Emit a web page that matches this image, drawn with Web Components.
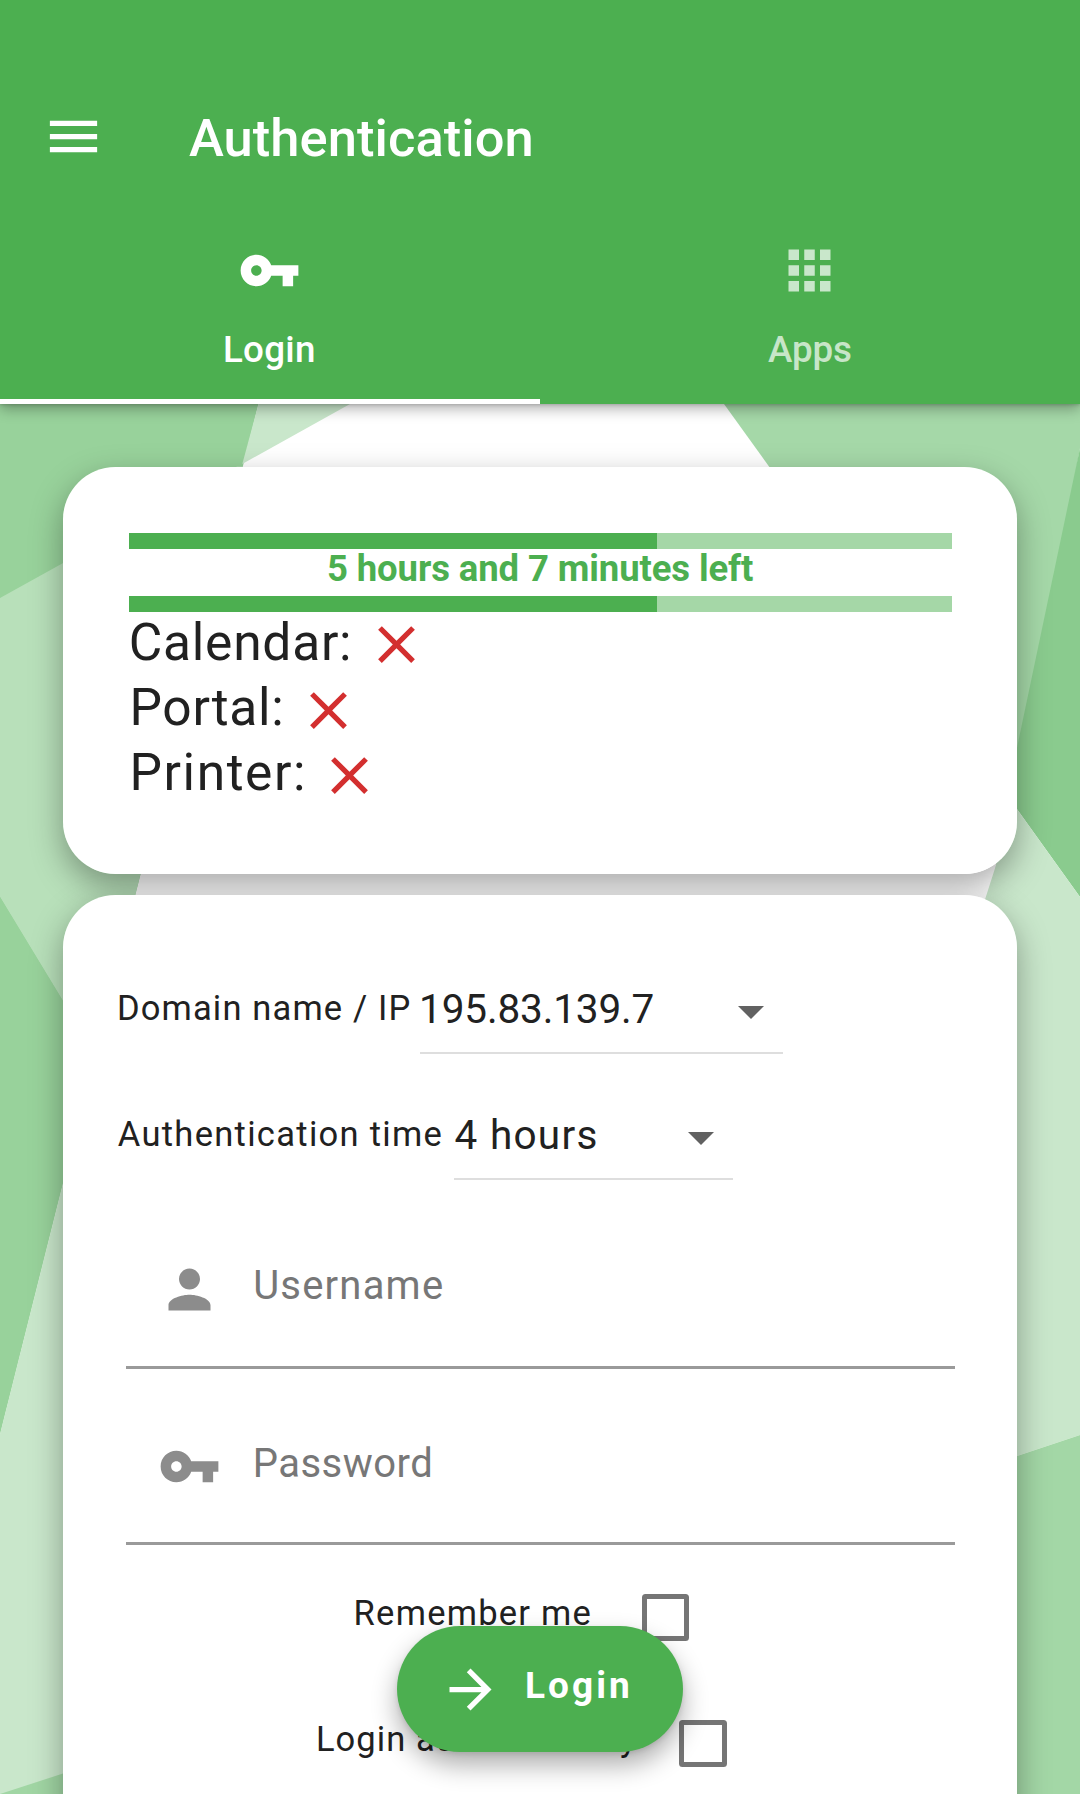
<!DOCTYPE html>
<html lang="en">
<head>
<meta charset="utf-8">
<title>Authentication</title>
<style>
  html, body { margin: 0; padding: 0; }
  body { font-family: Roboto, "Liberation Sans", sans-serif; color: #212121; background: #fff; height: 1794px; overflow: hidden; }
</style>
</head>
<body>
<auth-screen>
  <app-header slot="header">
    <fit-text slot="title" size="52.5" weight="500" ink="342.5">Authentication</fit-text>
    <app-tab slot="tabs" icon="key" active><fit-text size="36.75" weight="500" ink="89">Login</fit-text></app-tab>
    <app-tab slot="tabs" icon="apps"><fit-text size="36.75" weight="500" ink="83">Apps</fit-text></app-tab>
  </app-header>
  <material-card style="--pad:66px 65px 65.8px 66px">
    <time-left value="64.2"><fit-text size="36.5" weight="700" ink="425">5 hours and 7 minutes left</fit-text></time-left>
    <status-row><fit-text size="51.5" ink="217.3" lead="2.800">Calendar:</fit-text></status-row>
    <status-row><fit-text size="51.5" ink="147.7" lead="4.500">Portal:</fit-text></status-row>
    <status-row><fit-text size="51.5" ink="169.4" lead="4.500">Printer:</fit-text></status-row>
  </material-card>
  <material-card style="--pad:33px 62.4px 0 55.3px">
    <select-row style="--gap:10.4px;--w:363px"><fit-text slot="label" size="34.5" ink="290.500" lead="0.700">Domain name / IP</fit-text><fit-text size="40.5" ink="230.5" lead="2.200">195.83.139.7</fit-text></select-row>
    <select-row style="--gap:12.700px;--w:278.6px"><fit-text slot="label" size="34.5" ink="323.8" lead="-0.500">Authentication time</fit-text><fit-text size="40.5" ink="139.8" lead="1.3">4 hours</fit-text></select-row>
    <text-field icon="person" style="--top:78px;--bottom:48px"><fit-text size="40" ink="186.7">Username</fit-text></text-field>
    <text-field icon="key" style="--top:66px;--bottom:46.600px;--lift:5px"><fit-text size="40" ink="174.6" lead="0.500">Password</fit-text></text-field>
    <check-row style="--gap:51px;margin-top:9.600px"><fit-text size="34.5" ink="235">Remember me</fit-text></check-row>
    <check-row style="--gap:43.400px"><fit-text size="34.5" ink="318">Login automatically</fit-text></check-row>
  </material-card>
  <login-button slot="fab"><fit-text size="37" weight="700" ink="101">Login</fit-text></login-button>
</auth-screen>

<script>
const ICONS = {
  menu: 'M3 18h18v-2H3v2zm0-5h18v-2H3v2zm0-7v2h18V6H3z',
  key: 'M12.65 10C11.83 7.67 9.61 6 7 6c-3.31 0-6 2.69-6 6s2.69 6 6 6c2.61 0 4.83-1.67 5.65-4H17v4h4v-4h2v-4H12.65zM7 14c-1.1 0-2-.9-2-2s.9-2 2-2 2 .9 2 2-.9 2-2 2z',
  apps: 'M4 8h4V4H4v4zm6 12h4v-4h-4v4zm-6 0h4v-4H4v4zm0-6h4v-4H4v4zm6 0h4v-4h-4v4zm6-10v4h4V4h-4zm-6 4h4V4h-4v4zm6 6h4v-4h-4v4zm0 6h4v-4h-4v4z',
  person: 'M12 12c2.21 0 4-1.79 4-4s-1.79-4-4-4-4 1.79-4 4 1.79 4 4 4zm0 2c-2.67 0-8 1.34-8 4v2h16v-2c0-2.66-5.33-4-8-4z',
  close: 'M19 6.41L17.59 5 12 10.59 6.41 5 5 6.41 10.59 12 5 17.59 6.41 19 12 13.41 17.59 19 19 17.59 13.41 12z',
  forward: 'M12 4l-1.41 1.41L16.17 11H4v2h12.17l-5.58 5.59L12 20l8-8z'
};
const icon = name => `<svg width="63" height="63" viewBox="0 0 24 24" fill="currentColor" aria-hidden="true"><path d="${ICONS[name]}"/></svg>`;

class Base extends HTMLElement {
  connectedCallback() {
    if (this.shadowRoot) return;
    this.attachShadow({ mode: 'open' }).innerHTML = `<style>*{box-sizing:border-box}svg{display:block;flex:none}${this.css()}</style>${this.html()}`;
    this.ready?.();
  }
}

/* One line of text tracked so that its glyphs span a given width. */
class FitText extends Base {
  css() { return `:host{display:block;flex:none;white-space:pre;line-height:48px}`; }
  html() { return `<slot></slot>`; }
  ready() {
    const size = +this.getAttribute('size'), weight = this.getAttribute('weight') || 400;
    const ink = +this.getAttribute('ink'), lead = +(this.getAttribute('lead') || 0);
    const text = this.textContent;
    const ctx = document.createElement('canvas').getContext('2d');
    ctx.font = `${weight} ${size}px Roboto, "Liberation Sans", sans-serif`;
    const m = ctx.measureText(text);
    const natural = m.actualBoundingBoxLeft + m.actualBoundingBoxRight;
    Object.assign(this.style, {
      fontSize: size + 'px', fontWeight: weight, width: ink + 'px', marginLeft: lead + 'px',
      textIndent: m.actualBoundingBoxLeft + 'px',
      letterSpacing: (ink - natural) / (text.length - 1) + 'px'
    });
  }
}

class AuthScreen extends Base {
  css() { return `
    :host{display:grid;position:relative;width:1080px;height:1794px;overflow:hidden;isolation:isolate}
    .bg,.page{grid-area:1/1}
    .bg{z-index:-2}
    .page{display:flex;flex-direction:column}
    main{display:flex;flex-direction:column;gap:21px;padding:62.75px 63px 0}
    .fab{position:absolute;left:397px;top:1626px}`; }
  html() { return `
    <svg class="bg" width="1080" height="1794" viewBox="0 0 1080 1794">
      <path fill="#fff" d="M0 0h1080v1794H0z"/>
      <path fill="#98d29b" d="M0 404h258.5L0 1434z"/>
      <path fill="#b8e0ba" d="M0 598L237 466.6h5.8L140.500 874 108 1004 63 1001 0 897z"/>
      <path fill="#98d29b" d="M0 897l63 104 45 3L0 1434z"/>
      <path fill="#c9e7cb" d="M258.5 404H350L242.3 464z"/>
      <path fill="#c9e7cb" d="M0 1434L108 1004H540v790H0z"/>
      <path fill="#a1d6a4" d="M0 1794l63-20.5V1794z"/>
      <path fill="#a5d8a8" d="M724 404h356v44L1016 810z"/>
      <path fill="#8acb8e" d="M1080 448V897L1007 795.200z"/>
      <path fill="#c9e7cb" d="M1008.500 797.200L1080 897v538l-63 21h-77V1040L996.700 863z"/>
      <path fill="#c9e7cb" d="M1008.500 797.200L989.500 901l-10 54h60z"/>
      <path fill="#a3d7a6" d="M1080 1435l-63 21v338h63z"/>
    </svg>
    <div class="page"><slot name="header"></slot><main><slot></slot></main></div>
    <div class="fab"><slot name="fab"></slot></div>`; }
}

class AppHeader extends Base {
  css() { return `
    :host{display:block;background:#4caf50;color:#fff;padding-top:63px;height:404.25px;box-sizing:border-box;
      box-shadow:0 5px 13px rgba(0,0,0,.3),0 1px 3px rgba(0,0,0,.16)}
    .bar{display:flex;align-items:center;height:147px;padding-left:42px}
    .title{padding:2.400px 0 0 84px}
    .tabs{display:flex}`; }
  html() { return `<div class="bar">${icon('menu')}<div class="title"><slot name="title"></slot></div></div><div class="tabs"><slot name="tabs"></slot></div>`; }
}

class AppTab extends Base {
  css() { return `
    :host{display:flex;flex-direction:column;align-items:center;box-sizing:border-box;width:540px;height:194.250px;
      padding:28.900px 1px 0 0;color:rgba(255,255,255,.7);border-bottom:5.250px solid transparent}
    :host([active]){color:#fff;border-bottom-color:#fff}
    .label{margin-top:24.500px}`; }
  html() { return `${icon(this.getAttribute('icon'))}<div class="label"><slot></slot></div>`; }
}

class MaterialCard extends Base {
  css() { return `
    :host{display:block;position:relative;box-sizing:border-box;border-radius:52.5px;background:#fff;padding:var(--pad)}
    :host::before{content:"";position:absolute;inset:0;z-index:-1;border-radius:inherit;box-shadow:0 12px 32px rgba(0,0,0,.34)}
    :host(:last-of-type){flex:none;height:960px}`; }
  html() { return `<slot></slot>`; }
}

class TimeLeft extends Base {
  css() { return `
    :host{display:block;color:#4caf50}
    .bar{height:16px;background:#a5d7a7}
    .bar i{display:block;height:100%;background:#4caf50}
    .text{display:flex;justify-content:center;height:47px}
    ::slotted(fit-text){line-height:40.400px}`; }
  html() {
    const bar = `<div class="bar"><i style="width:${this.getAttribute('value')}%"></i></div>`;
    return `${bar}<div class="text"><slot></slot></div>${bar}`;
  }
}

class StatusRow extends Base {
  css() { return `
    :host{display:flex;align-items:center;gap:15.500px;height:65.400px}
    .label{padding-bottom:4px}
    svg{color:#d32f2f}`; }
  html() { return `<div class="label"><slot></slot></div>${icon('close')}`; }
}

class SelectRow extends Base {
  css() { return `
    :host{display:flex;align-items:flex-end;gap:var(--gap);height:126px}
    .label{padding-bottom:22.200px}
    .select{display:flex;justify-content:space-between;width:var(--w);padding:0 19px 18.500px 0;border-bottom:2px solid #dedede}
    svg{margin-top:20.500px;color:#616161}`; }
  html() { return `<div class="label"><slot name="label"></slot></div><div class="select"><slot></slot>
    <svg width="26" height="13" viewBox="0 0 26 13" fill="currentColor"><path d="M0 0h26L13 13z"/></svg></div>`; }
}

class TextField extends Base {
  css() { return `
    :host{display:flex;align-items:center;gap:34.500px;margin-left:8px;padding:var(--top) 0 var(--bottom) 31.400px;color:#777;position:relative}
    :host::after{content:"";position:absolute;left:0;right:0;bottom:0;height:2.600px;background:#9a9a9a}
    svg{color:#8c8c8c}
    .label{padding-bottom:var(--lift,7px)}`; }
  html() { return `${icon(this.getAttribute('icon'))}<div class="label"><slot></slot></div>`; }
}

class CheckRow extends Base {
  css() { return `
    :host{display:flex;align-items:center;justify-content:center;gap:var(--gap);height:126px;margin-left:7px;padding-right:35.400px;box-sizing:border-box}
    .label{padding-bottom:7.500px}
    .box{width:47.300px;height:47.300px;border:5px solid #757575;border-radius:3.500px}`; }
  html() { return `<div class="label"><slot></slot></div><div class="box"></div>`; }
}

class LoginButton extends Base {
  css() { return `
    :host{display:flex;align-items:center;box-sizing:border-box;width:286px;height:126px;padding-left:41.500px;gap:25.500px;border-radius:63px;
      background:#4caf50;color:#fff;box-shadow:0 13px 26px rgba(0,0,0,.32),0 2px 5px rgba(0,0,0,.1)}
    .label{padding-bottom:6px}`; }
  html() { return `${icon('forward')}<div class="label"><slot></slot></div>`; }
}

for (const [name, cls] of Object.entries({
  'fit-text': FitText, 'auth-screen': AuthScreen, 'app-header': AppHeader, 'app-tab': AppTab,
  'material-card': MaterialCard, 'time-left': TimeLeft, 'status-row': StatusRow, 'select-row': SelectRow,
  'text-field': TextField, 'check-row': CheckRow, 'login-button': LoginButton
})) customElements.define(name, cls);
</script>
</body>
</html>
